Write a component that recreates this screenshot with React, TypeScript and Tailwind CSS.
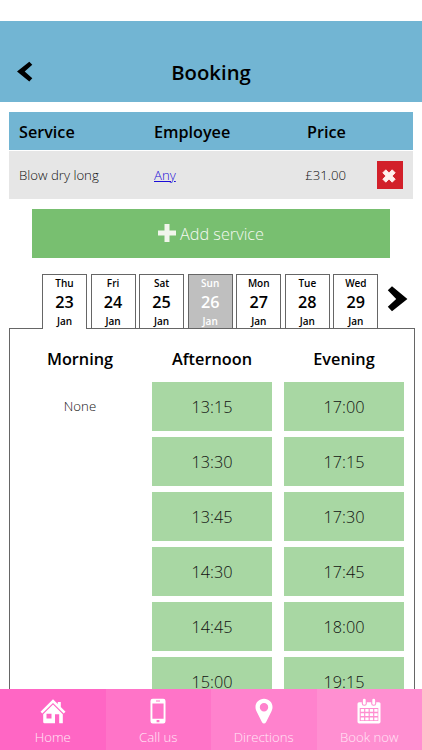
import React from "react";

const days = [
  { name: "Thu", date: "23", state: "active" },
  { name: "Fri", date: "24", state: "normal" },
  { name: "Sat", date: "25", state: "normal" },
  { name: "Sun", date: "26", state: "closed" },
  { name: "Mon", date: "27", state: "normal" },
  { name: "Tue", date: "28", state: "normal" },
  { name: "Wed", date: "29", state: "normal" },
];

const afternoon = ["13:15", "13:30", "13:45", "14:30", "14:45", "15:00"];
const evening = ["17:00", "17:15", "17:30", "17:45", "18:00", "19:15"];

const tabStyles: Record<string, string> = {
  active: "h-[55px] bg-white border-b-0 z-10",
  normal: "h-[54px] bg-white border-b-0",
  closed: "h-[54px] bg-[#bfbfbf] text-white border-b-0",
};

function HomeIcon() {
  return (
    <svg width="26" height="26" viewBox="0 0 26 26" fill="#fff">
      <path d="M.5 13.8 13 1.2l4.800 4.700V4h3v5l4.700 4.800-1.800 1.800L13 4.900 2.300 15.600z" />
      <path fillRule="evenodd" d="M13 6.500 22.800 16.300v9h-3.600v-9h-4.200v9H4.600q-1.400 0-1.400-1.400v-7.600zM6.500 15.800v4.800h5v-4.800z" />
    </svg>
  );
}

function PhoneIcon() {
  return (
    <svg width="16" height="26" viewBox="0 0 16 26">
      <path fill="#fff" fillRule="evenodd" d="M2.700.7h10.600q2.200 0 2.200 2.200v20.400q0 2.200-2.200 2.200H2.700q-2.200 0-2.200-2.200V2.900Q.5.700 2.700.700zM2.400 5.500v15.200h11.200V5.500zM6 2.600v.9h4v-.9zM6.600 22v2.200h2.800V22z" />
    </svg>
  );
}

function PinIcon() {
  return (
    <svg width="18" height="26" viewBox="0 0 18 26">
      <path fill="#fff" fillRule="evenodd" d="M9 .8c4.800 0 8.500 3.600 8.500 8.300 0 1.700-.4 2.800-1 4.200L11 24.200q-.7 1.200-2 1.200t-2-1.200L1.500 13.300C.9 11.900.5 10.800.5 9.100.5 4.400 4.200.8 9 .8zM9 5a4.200 4.200 0 1 0 0 8.400A4.200 4.200 0 0 0 9 5z" />
    </svg>
  );
}

function CalendarIcon() {
  return (
    <svg width="24" height="26" viewBox="0 0 24 26">
      <path fill="#fff" d="M2 4.200h20q1.500 0 1.500 1.500v18q0 1.700-1.700 1.700H2.200Q.5 25.400.5 23.700v-18Q.5 4.200 2 4.200z" />
      <g fill="#ff8fd1">
        <rect x="4.800" y=".5" width="5" height="7.300" rx="2.300" />
        <rect x="14.200" y=".5" width="5" height="7.300" rx="2.300" />
        <rect x="2.700" y="10" width="18.600" height="13" />
      </g>
      <g fill="#fff">
        <rect x="5.900" y=".8" width="2.800" height="6" rx="1.300" />
        <rect x="15.300" y=".8" width="2.800" height="6" rx="1.300" />
        <path d="M3.800 11h3.300v2.800H3.800zM8.300 11h3.300v2.800H8.300zM12.800 11h3.300v2.800h-3.300zM17.300 11h3.300v2.800h-3.300zM3.800 15.200h3.300V18H3.800zM8.300 15.200h3.300V18H8.300zM12.800 15.200h3.300V18h-3.300zM17.300 15.200h3.300V18h-3.300zM3.800 19.400h3.300v2.800H3.800zM8.300 19.400h3.300v2.800H8.300zM12.800 19.400h3.300v2.800h-3.300zM17.300 19.400h3.300v2.800h-3.300z" />
      </g>
    </svg>
  );
}

const nav = [
  { label: "Home", bg: "bg-[#ff66c4]", icon: <HomeIcon /> },
  { label: "Call us", bg: "bg-[#ff74c8]", icon: <PhoneIcon /> },
  { label: "Directions", bg: "bg-[#ff82cd]", icon: <PinIcon /> },
  { label: "Book now", bg: "bg-[#ff8fd1]", icon: <CalendarIcon /> },
];

function Slots({ title, times }: { title: string; times: string[] }) {
  return (
    <div className="w-[120px] flex flex-col items-center">
      <h2 className="h-[53px] shrink-0 pt-[18px] text-[16.3px] leading-6 font-semibold">{title}</h2>
      <div className="w-full flex flex-col gap-[6px]">
        {times.map((t) => (
          <button key={t} className="h-[49px] w-full shrink-0 bg-[#a8d7a3] text-[16.3px] leading-6 font-light text-[#111]">
            {t}
          </button>
        ))}
      </div>
    </div>
  );
}

export default function App() {
  return (
    <div className="w-[422px] h-[750px] overflow-hidden bg-white text-black flex flex-col font-['Open_Sans',sans-serif]">
      <div className="h-[21px] shrink-0" />
      <header className="h-[81px] shrink-0 bg-[#72b5d3] grid grid-cols-[60px_1fr_60px] pt-[36px]">
        <button className="pl-[17px] pt-[4px] self-start">
          <svg width="16" height="21" viewBox="0 0 16 21">
            <path d="M0 10.500 12.300.700l3 3-7.600 6.800 7.600 6.700-3 3.300z" />
          </svg>
        </button>
        <h1 className="text-center text-[20.3px] leading-[30px] font-semibold">Booking</h1>
      </header>

      <section className="mt-[10px] ml-[9px] w-[404px] shrink-0">
        <div className="h-[38px] pt-[2px] bg-[#72b5d3] grid grid-cols-[135px_153px_1fr] pl-[10px] items-center text-[16.2px] font-semibold">
          <span>Service</span>
          <span>Employee</span>
          <span>Price</span>
        </div>
        <div className="mt-px h-[48px] bg-[#e6e6e6] flex items-center pl-[10px] text-[13.2px] font-light text-[#111]">
          <span className="w-[135px] pt-px">Blow dry long</span>
          <a className="w-[122px] pt-px text-[#1a0dd8] underline">Any</a>
          <span className="w-[70px] pt-px text-right">£31.00</span>
          <button className="ml-[30.5px] w-[26.5px] h-[28px] bg-[#d2202a] flex items-center justify-center pt-[2px] pr-[2px]">
            <svg width="14" height="14" viewBox="0 0 14 14">
              <path d="M3.800.800 7 3.900 10.200.800 13.200 3.800 10.100 7l3.100 3.200-3 3L7 10.100l-3.200 3.100-3-3L3.900 7 .8 3.800z" fill="#fff0ee" stroke="#fff0ee" strokeWidth=".9" strokeLinejoin="round" />
            </svg>
          </button>
        </div>
      </section>

      <button className="mt-[10px] ml-[32px] w-[358px] h-[49px] shrink-0 bg-[#78bf70] flex items-center justify-center gap-[4px] text-[16.3px] font-light text-[#f4f8f0]">
        <svg className="-mt-[2px]" width="18" height="18" viewBox="0 0 18 18">
          <path d="M6.500 0h5v6.500H18v5h-6.500V18h-5v-6.500H0v-5h6.500z" fill="#f2f5ec" />
        </svg>
        <span className="pt-px">Add service</span>
      </button>

      <div className="mt-[16px] pl-[42px] h-[54px] shrink-0 flex">
        <div className="w-[336.4px] flex justify-between">
          {days.map((d) => (
            <div
              key={d.date}
              className={"relative w-[45px] border border-[#666] flex flex-col items-center font-semibold " + tabStyles[d.state]}
            >
              <span className="text-[10px] leading-[14px] pt-px">{d.name}</span>
              <span className="text-[16.2px] leading-[24px]">{d.date}</span>
              <span className="text-[10px] leading-[14px]">Jan</span>
            </div>
          ))}
        </div>
        <svg className="ml-[8.6px] mt-[11px]" width="22" height="28" viewBox="0 0 22 28">
          <path d="M5 1.300 20.400 14.100 5 26.200.8 21.700 9.200 14 .8 5.200z" />
        </svg>
      </div>

      <section className="ml-[9px] w-[406px] h-[361px] shrink-0 overflow-hidden border border-b-0 border-[#666] flex">
        <div className="w-[130px] ml-[5px] flex flex-col items-center">
          <h2 className="pt-[18px] text-[16.3px] leading-6 font-semibold">Morning</h2>
          <p className="pt-[25px] text-[13.2px] leading-5 font-light text-[#111]">None</p>
        </div>
        <div className="ml-[7px] flex gap-[12px]">
          <Slots title="Afternoon" times={afternoon} />
          <Slots title="Evening" times={evening} />
        </div>
      </section>

      <nav className="h-[61px] shrink-0 grid grid-cols-4">
        {nav.map((n) => (
          <a key={n.label} className={"flex flex-col items-center pt-[9px] " + n.bg}>
            {n.icon}
            <span className="pt-[3px] text-[13.2px] leading-5 font-light text-[#ffe6f6]">{n.label}</span>
          </a>
        ))}
      </nav>
    </div>
  );
}
